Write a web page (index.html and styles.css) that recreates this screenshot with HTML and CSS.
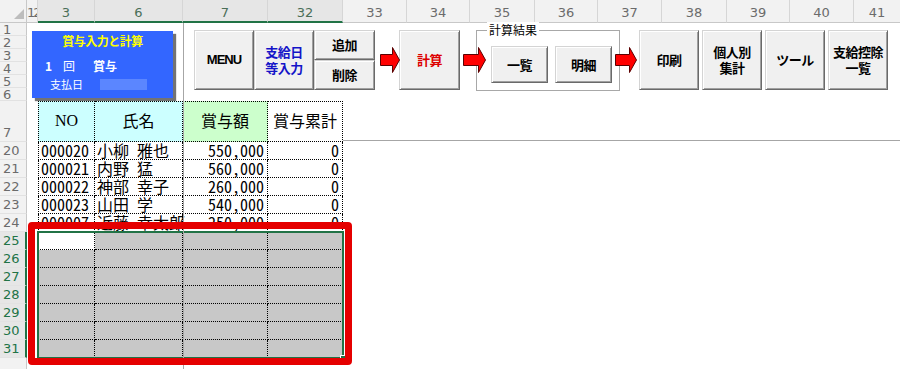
FILE: index.html
```html
<!DOCTYPE html>
<html lang="ja">
<head>
    <meta charset="UTF-8">
    <title>賞与入力と計算</title>
    <link rel="stylesheet" href="styles.css">
</head>
<body>
<div class="sheet">
    <!-- 列見出し -->
    <div class="colheads">
        <div class="corner"><span class="tri"></span></div>
        <div class="ch w12">12</div>
        <div class="ch sel w3">3</div>
        <div class="ch sel w6">6</div>
        <div class="ch sel w7">7</div>
        <div class="ch sel w32">32</div>
        <div class="ch w33">33</div>
        <div class="ch w34">34</div>
        <div class="ch w35">35</div>
        <div class="ch w36">36</div>
        <div class="ch w37">37</div>
        <div class="ch w38">38</div>
        <div class="ch w39">39</div>
        <div class="ch w40">40</div>
        <div class="ch last">41</div>
    </div>

    <div class="main">
        <!-- 行見出し -->
        <div class="rowheads">
            <div class="rh">1</div>
            <div class="rh">2</div>
            <div class="rh">3</div>
            <div class="rh">4</div>
            <div class="rh">5</div>
            <div class="rh">6</div>
            <div class="rh r7">7</div>
            <div class="rh d">20</div>
            <div class="rh d">21</div>
            <div class="rh d">22</div>
            <div class="rh d">23</div>
            <div class="rh d">24</div>
            <div class="rh d sel">25</div>
            <div class="rh d sel">26</div>
            <div class="rh d sel">27</div>
            <div class="rh d sel">28</div>
            <div class="rh d sel">29</div>
            <div class="rh d sel">30</div>
            <div class="rh d sel">31</div>
            <div class="rh filler"></div>
        </div>

        <div class="cells">
            <!-- ボタン類 -->
            <div class="toolbar">
                <div class="panel">
                    <div class="panel-title">賞与入力と計算</div>
                    <div class="panel-count"><span class="no">1</span><span class="kai">回</span><span class="kind">賞与</span></div>
                    <div class="panel-pay"><span>支払日</span><span class="paybox"></span></div>
                </div>
                <div class="btn big menu">MENU</div>
                <div class="btn big blue">支給日<br>等入力</div>
                <div class="stack">
                    <div class="btn half">追加</div>
                    <div class="btn half">削除</div>
                </div>
                <svg class="arrow a1" width="20" height="26" viewBox="0 0 20 26"><path d="M0.5 7.5 H12.5 V0.5 L19.5 13 L12.5 25.5 V18.5 H0.5 Z" fill="#f00" stroke="#5a0000"/></svg>
                <div class="btn big red">計算</div>
                <svg class="arrow a2" width="23" height="26" viewBox="0 0 23 26"><path d="M0.5 7.5 H15.5 V0.5 L22.5 13 L15.5 25.5 V18.5 H0.5 Z" fill="#f00" stroke="#5a0000"/></svg>
                <div class="group">
                    <span class="group-label">計算結果</span>
                    <div class="btn small">一覧</div>
                    <div class="btn small">明細</div>
                </div>
                <svg class="arrow a3" width="22" height="26" viewBox="0 0 22 26"><path d="M0.5 7.5 H14.5 V0.5 L21.5 13 L14.5 25.5 V18.5 H0.5 Z" fill="#f00" stroke="#5a0000"/></svg>
                <div class="btn big print">印刷</div>
                <div class="btn big">個人別<br>集計</div>
                <div class="btn big">ツール</div>
                <div class="btn big">支給控除<br>一覧</div>
            </div>

            <!-- 明細表 -->
            <div class="table">
                <div class="c hd first cyan serif">NO</div>
                <div class="c hd cyan">氏名</div>
                <div class="c hd green">賞与額</div>
                <div class="c hd">賞与累計</div>

                <div class="c first">000020</div>
                <div class="c">小柳 雅也</div>
                <div class="c num">550,000</div>
                <div class="c num">0</div>

                <div class="c first">000021</div>
                <div class="c">内野 猛</div>
                <div class="c num">560,000</div>
                <div class="c num">0</div>

                <div class="c first">000022</div>
                <div class="c">神部 幸子</div>
                <div class="c num">260,000</div>
                <div class="c num">0</div>

                <div class="c first">000023</div>
                <div class="c">山田 学</div>
                <div class="c num">540,000</div>
                <div class="c num">0</div>

                <div class="c first">000007</div>
                <div class="c">近藤 幸太郎</div>
                <div class="c num">250,000</div>
                <div class="c num">0</div>
            </div>

            <!-- 選択範囲 -->
            <div class="selection">
                <div class="c first active"></div><div class="c"></div><div class="c"></div><div class="c"></div>
                <div class="c first"></div><div class="c"></div><div class="c"></div><div class="c"></div>
                <div class="c first"></div><div class="c"></div><div class="c"></div><div class="c"></div>
                <div class="c first"></div><div class="c"></div><div class="c"></div><div class="c"></div>
                <div class="c first"></div><div class="c"></div><div class="c"></div><div class="c"></div>
                <div class="c first"></div><div class="c"></div><div class="c"></div><div class="c"></div>
                <div class="c first"></div><div class="c"></div><div class="c"></div><div class="c"></div>
                <span class="handle"></span>
            </div>
        </div>
    </div>

    <!-- ウィンドウ枠の固定線と赤枠 -->
    <div class="freeze-v"></div>
    <div class="freeze-h"></div>
    <div class="red-frame"></div>
</div>
</body>
</html>
```

FILE: styles.css
```css
* {
    box-sizing: border-box;
}

body {
    margin: 0;
    background: #fff;
    font-family: "Noto Sans CJK JP", sans-serif;
}

.sheet {
    position: relative;
    width: 900px;
    height: 369px;
    display: flex;
    flex-direction: column;
    overflow: hidden;
}

/* 列見出し */
.colheads {
    display: flex;
    flex: none;
    height: 23px;
    background: #f2f2f2;
}

.corner {
    width: 27px;
    height: 23px;
    display: flex;
    justify-content: flex-end;
    align-items: flex-end;
    padding: 0 2px 3px 0;
    border-right: 1px solid #c8c8c8;
    border-bottom: 1px solid #c8c8c8;
}

.tri {
    width: 0;
    height: 0;
    border-left: 10px solid transparent;
    border-bottom: 10px solid #bdbdbd;
}

.ch {
    flex: none;
    height: 23px;
    padding-top: 4px;
    line-height: 18px;
    text-align: center;
    font-family: "DejaVu Sans", sans-serif;
    font-size: 13px;
    color: #6b6b6b;
    border-right: 1px solid #d6d6d6;
    border-bottom: 1px solid #c8c8c8;
    white-space: nowrap;
    overflow: hidden;
}

.ch.sel {
    background: #e6e6e6;
    color: #4a6e57;
    border-bottom: 2px solid #217346;
}

.w12 { width: 11px; text-align: left; letter-spacing: -2px; }
.w3 { width: 57px; }
.w6 { width: 88px; }
.w7 { width: 85px; }
.w32 { width: 75px; }
.w33 { width: 64px; }
.w34 { width: 63px; }
.w35 { width: 65px; }
.w36 { width: 63px; }
.w37 { width: 64px; }
.w38 { width: 65px; }
.w39 { width: 63px; }
.w40 { width: 64px; }
.ch.last { flex: 1; border-right: none; }

/* 行見出し */
.main {
    display: flex;
    flex: 1;
}

.rowheads {
    width: 27px;
    flex: none;
    display: flex;
    flex-direction: column;
    background: #f2f2f2;
}

.rh {
    height: 13px;
    line-height: 13px;
    padding-left: 3px;
    font-family: "DejaVu Sans", sans-serif;
    font-size: 13px;
    color: #6b6b6b;
    border-right: 1px solid #c8c8c8;
    border-bottom: 1px solid #e2e2e2;
    overflow: hidden;
}

.rh.r7 {
    height: 41px;
    display: flex;
    align-items: flex-end;
    padding-bottom: 2px;
}

.rh.d {
    height: 18px;
    line-height: 17px;
}

.rh.sel {
    background: #e6e6e6;
    color: #217346;
    border-right: 2px solid #217346;
}

.rh.filler {
    flex: 1;
    border-bottom: none;
}

.cells {
    flex: 1;
    display: flex;
    flex-direction: column;
}

/* ボタン類 */
.toolbar {
    height: 78px;
    flex: none;
    display: flex;
    align-items: flex-start;
    padding-top: 7px;
}

.panel {
    width: 141px;
    height: 67px;
    margin: 1px 0 0 5px;
    background: #3366ff;
    box-shadow: 3px 3px 1px rgba(0, 0, 0, 0.55);
    color: #fff;
    font-weight: bold;
    font-size: 12px;
    line-height: 16px;
    padding-top: 2px;
}

.panel-title {
    text-align: center;
    color: #ffff00;
    letter-spacing: -0.5px;
}

.panel-count {
    display: flex;
    margin-top: 9px;
    padding-left: 13px;
}

.panel-count .kai {
    margin-left: 11px;
    font-weight: normal;
}

.panel-count .kind {
    margin-left: 18px;
}

.panel-pay {
    display: flex;
    align-items: center;
    margin-top: 2px;
    padding-left: 18px;
    font-size: 11px;
    font-weight: normal;
}

.paybox {
    width: 47px;
    height: 11px;
    margin-left: 17px;
    background: #5b86ff;
}

.btn {
    flex: none;
    display: flex;
    align-items: center;
    justify-content: center;
    text-align: center;
    background: #f0f0f0;
    border: 1px solid;
    border-color: #d4d4d4 #6a6a6a #6a6a6a #d4d4d4;
    box-shadow: inset 1px 1px 0 #fff, inset -1px -1px 0 #a0a0a0;
    font-size: 13px;
    font-weight: bold;
    line-height: 16px;
    color: #000;
    letter-spacing: -0.5px;
}

.btn.big {
    width: 60px;
    height: 60px;
}

.btn.menu {
    margin-left: 21px;
    font-family: "Liberation Sans", sans-serif;
    letter-spacing: -1px;
}

.btn.blue { color: #1414c8; }
.btn.red { width: 61px; margin-left: -1px; color: #dd0000; }

.stack {
    width: 61px;
    display: flex;
    flex-direction: column;
}

.btn.half {
    width: 61px;
    height: 30px;
}

.arrow {
    flex: none;
    margin-top: 17px;
    position: relative;
    z-index: 1;
}

.a1 { margin-left: 5px; }
.a2 { margin-left: 3px; }
.a3 { margin-left: -5px; }

.group {
    position: relative;
    flex: none;
    width: 144px;
    height: 61px;
    margin-left: -10px;
    border: 1px solid #a8a8a8;
    box-shadow: inset 1px 1px 0 #fff;
    display: flex;
    gap: 7px;
    padding: 15px 0 0 14px;
}

.group-label {
    position: absolute;
    top: -9px;
    left: 10px;
    padding: 0 2px;
    background: #fff;
    font-size: 12px;
    line-height: 16px;
}

.btn.small {
    width: 57px;
    height: 37px;
}

.btn.print { margin-left: 2px; }
.print ~ .btn { margin-left: 3px; }

/* 明細表 */
.table,
.selection {
    margin-left: 11px;
    width: 305px;
    display: grid;
    grid-template-columns: 57px 88px 85px 75px;
}

.table {
    grid-template-rows: 41px repeat(5, 18px);
}

.selection {
    position: relative;
    grid-template-rows: repeat(7, 18px);
    background: #c8c8c8;
    outline: 2px solid #217346;
    outline-offset: -1px;
}

.c {
    border-right: 1px dotted #000;
    border-bottom: 1px dotted #000;
    padding: 0 2px;
    font-size: 16px;
    line-height: 17px;
    white-space: nowrap;
    font-feature-settings: "hwid";
}

.c.first { border-left: 1px dotted #000; }

.c.hd {
    border-top: 1px dotted #000;
    display: flex;
    align-items: center;
    justify-content: center;
    padding-bottom: 2px;
}

.c.cyan { background: #ccffff; }
.c.green { background: #ccffcc; }
.c.serif { font-family: "Liberation Serif", serif; }
.c.num { text-align: right; padding-right: 3px; }
.c.active { background: #fff; }

.handle {
    position: absolute;
    right: -3px;
    bottom: -3px;
    width: 6px;
    height: 6px;
    background: #217346;
    border: 1px solid #fff;
}

/* 固定線・赤枠 */
.freeze-v {
    position: absolute;
    left: 183px;
    top: 23px;
    bottom: 0;
    width: 1px;
    background: #a6a6a6;
}

.freeze-h {
    position: absolute;
    left: 343px;
    right: 0;
    top: 140px;
    height: 1px;
    background: #a6a6a6;
}

.red-frame {
    position: absolute;
    left: 28px;
    top: 222px;
    width: 324px;
    height: 143px;
    border: 7px solid #e50000;
    border-radius: 4px;
}
```
